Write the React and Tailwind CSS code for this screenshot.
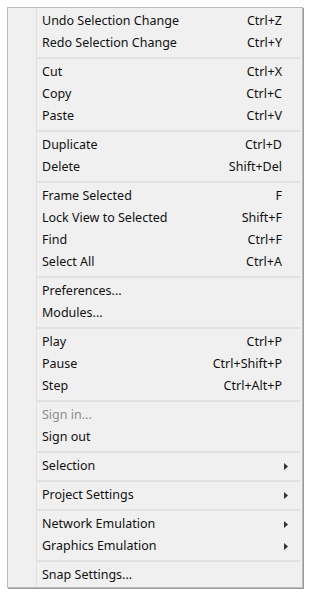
const groups = [
  [
    { label: "Undo Selection Change", keys: "Ctrl+Z" },
    { label: "Redo Selection Change", keys: "Ctrl+Y" },
  ],
  [
    { label: "Cut", keys: "Ctrl+X" },
    { label: "Copy", keys: "Ctrl+C" },
    { label: "Paste", keys: "Ctrl+V" },
  ],
  [
    { label: "Duplicate", keys: "Ctrl+D" },
    { label: "Delete", keys: "Shift+Del" },
  ],
  [
    { label: "Frame Selected", keys: "F" },
    { label: "Lock View to Selected", keys: "Shift+F" },
    { label: "Find", keys: "Ctrl+F" },
    { label: "Select All", keys: "Ctrl+A" },
  ],
  [{ label: "Preferences..." }, { label: "Modules..." }],
  [
    { label: "Play", keys: "Ctrl+P" },
    { label: "Pause", keys: "Ctrl+Shift+P" },
    { label: "Step", keys: "Ctrl+Alt+P" },
  ],
  [{ label: "Sign in...", disabled: true }, { label: "Sign out" }],
  [{ label: "Selection", sub: true }],
  [{ label: "Project Settings", sub: true }],
  [
    { label: "Network Emulation", sub: true },
    { label: "Graphics Emulation", sub: true },
  ],
  [{ label: "Snap Settings..." }],
];

function Arrow() {
  return (
    <svg width="4" height="7" viewBox="0 0 4 7" className="block">
      <path d="M0 0 L4 3.5 L0 7 Z" fill="#333" />
    </svg>
  );
}

function Item({ item }) {
  return (
    <div
      className={`flex h-[22px] items-center pl-[34px] pr-[20px] ${
        item.disabled ? "text-[#8d8d8d]" : "text-[#111]"
      }`}
    >
      <span className="flex-1">{item.label}</span>
      {item.keys && <span>{item.keys}</span>}
      {item.sub && (
        <span className="mr-[-6px]">
          <Arrow />
        </span>
      )}
    </div>
  );
}

export default function App() {
  return (
    <div className="min-h-screen bg-white p-[7px]" style={{ fontFamily: '"Noto Sans", "Open Sans", sans-serif' }}>
      <div className="relative w-[296px] border border-[#bcbcbc] bg-[#f0f0f0] pt-[2px] pb-[1px] text-[12.5px] shadow-[1px_1px_0_#9a9a9a]">
        <div className="absolute top-0 bottom-0 left-[28px] w-px bg-[#e2e2e2]" />
        {groups.map((group, gi) => (
          <div key={gi}>
            {gi > 0 && (
              <div className="flex h-[7px] items-center pl-[29px] pr-[2px]">
                <div className="h-[2px] w-full bg-[#e1e1e1]" />
              </div>
            )}
            {group.map((item) => (
              <Item key={item.label} item={item} />
            ))}
          </div>
        ))}
      </div>
    </div>
  );
}
